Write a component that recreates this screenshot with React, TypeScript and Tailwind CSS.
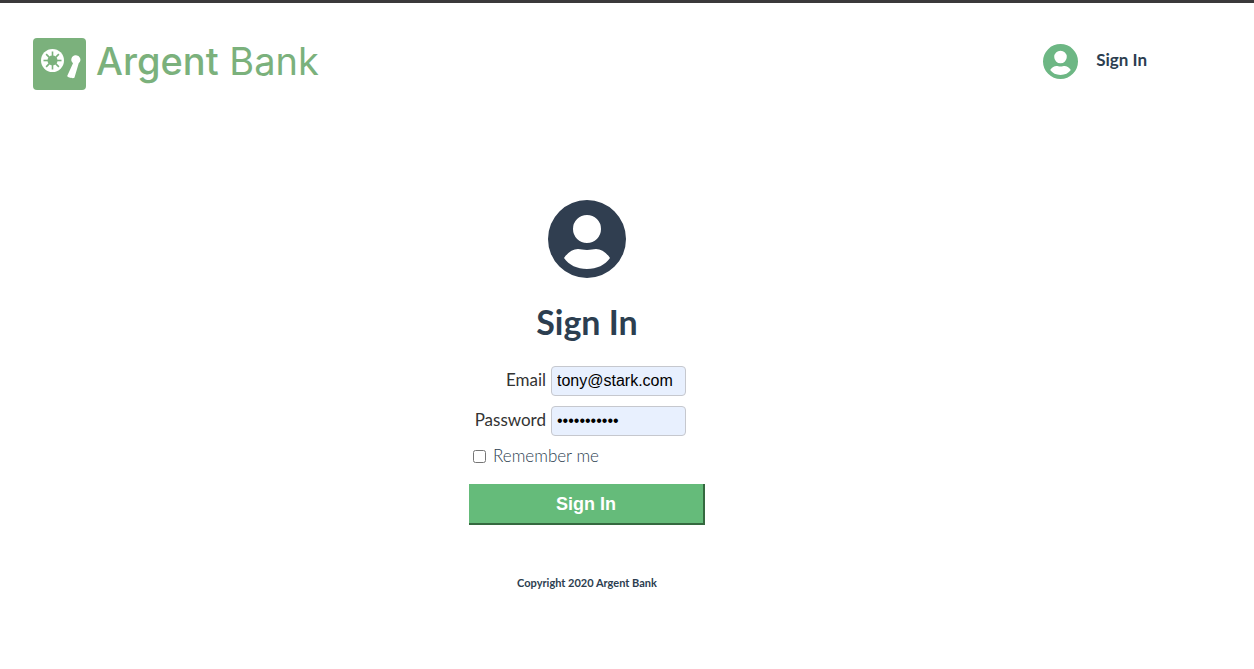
import { useState } from "react";

function UserIcon({ className }: { className: string }) {
  return (
    <svg viewBox="0 0 78 78" className={className} fill="currentColor" aria-hidden="true">
      <path
        fillRule="evenodd"
        d="M39 0a39 39 0 1 1 0 78a39 39 0 1 1 0-78ZM39 15a14 14 0 1 0 0 28a14 14 0 1 0 0-28ZM16 58C21 65 29 69 39 69S57 65 62 58C58 52 53 49 48 49C45 49 43 50 39 50S33 49 30 49C25 49 20 52 16 58Z"
      />
    </svg>
  );
}

function Logo() {
  const spokes = [0, 45, 90, 135, 180, 225, 270, 315];
  return (
    <a href="#home" className="flex items-center gap-2.5 text-[#7bb17c]">
      <svg viewBox="0 0 53 52" className="h-[52px] w-[53px] shrink-0" aria-hidden="true">
        <rect width="53" height="52" rx="4" fill="currentColor" />
        <circle cx="19.5" cy="22.5" r="11.5" fill="#fff" />
        <circle cx="19.5" cy="22.5" r="5" fill="currentColor" />
        {spokes.map((angle) => (
          <path
            key={angle}
            d="M19.5 18V13.5"
            stroke="currentColor"
            strokeWidth="1.6"
            transform={`rotate(${angle} 19.5 22.5)`}
          />
        ))}
        <path
          d="M42.5 17.2a4.5 4.5 0 0 1 3.2 8L41.5 39.6C41 41 34.5 39.5 34.2 38L40 25.2a4.5 4.5 0 0 1 2.5-8Z"
          fill="#fff"
        />
      </svg>
      <span className="font-[Inter,sans-serif] text-[38px] leading-[44px] whitespace-nowrap pb-1.5">
        <span className="font-medium">Argent</span> <span className="font-normal">Bank</span>
      </span>
    </a>
  );
}

export default function App() {
  const [email, setEmail] = useState("tony@stark.com");
  const [password, setPassword] = useState("ironman1234");
  const field =
    "h-[30px] w-[135px] rounded-[4px] border border-[#c6c8ce] bg-[#e8f0fe] px-[5px] font-['Liberation_Sans',Arial,sans-serif] text-base text-black";

  return (
    <div className="min-h-screen border-t-[3px] border-[#3b393b] bg-white pr-20 font-[Lato,sans-serif] text-[#2c3e50]">
      <header className="flex items-center justify-between pt-[35px] pr-[27px] pl-[33px]">
        <Logo />
        <nav className="pb-1.5">
          <a href="#sign-in" className="flex items-center gap-[18px] text-[17px] font-bold">
            <UserIcon className="size-[35px] text-[#6db784]" />
            <span className="pb-0.5">Sign In</span>
          </a>
        </nav>
      </header>

      <main className="mx-auto mt-[110px] flex w-[236px] flex-col items-center">
        <UserIcon className="size-[78px] text-[#303e50]" />
        <h1 className="mt-6 text-[34px] leading-10 font-bold">Sign In</h1>
        <form className="mt-6 w-full" onSubmit={(event) => event.preventDefault()}>
          <div className="flex flex-col gap-2.5 pr-[19px] text-[#333]">
            <div className="flex items-center justify-end gap-[5px]">
              <label htmlFor="email" className="pb-0.5 text-[17px]">Email</label>
              <input
                id="email"
                type="email"
                className={field}
                value={email}
                onChange={(event) => setEmail(event.target.value)}
              />
            </div>
            <div className="flex items-center justify-end gap-[5px]">
              <label htmlFor="password" className="pb-0.5 text-[17px]">Password</label>
              <input
                id="password"
                type="password"
                className={field}
                value={password}
                onChange={(event) => setPassword(event.target.value)}
              />
            </div>
          </div>
          <div className="mt-2 flex h-6 items-center gap-[7px] pl-1">
            <input id="remember" type="checkbox" className="size-[13px]" />
            <label htmlFor="remember" className="text-[17px] font-light">Remember me</label>
          </div>
          <button
            type="submit"
            className="mt-4 h-[41px] w-full border-r-2 border-b-2 border-[#34693f] bg-[#65bb7a] font-['Liberation_Sans',Arial,sans-serif] text-lg font-bold text-white"
          >
            Sign In
          </button>
        </form>
      </main>

      <footer className="mt-[50px] pb-6 text-center text-[11px] leading-4 font-bold">
        Copyright 2020 Argent Bank
      </footer>
    </div>
  );
}
